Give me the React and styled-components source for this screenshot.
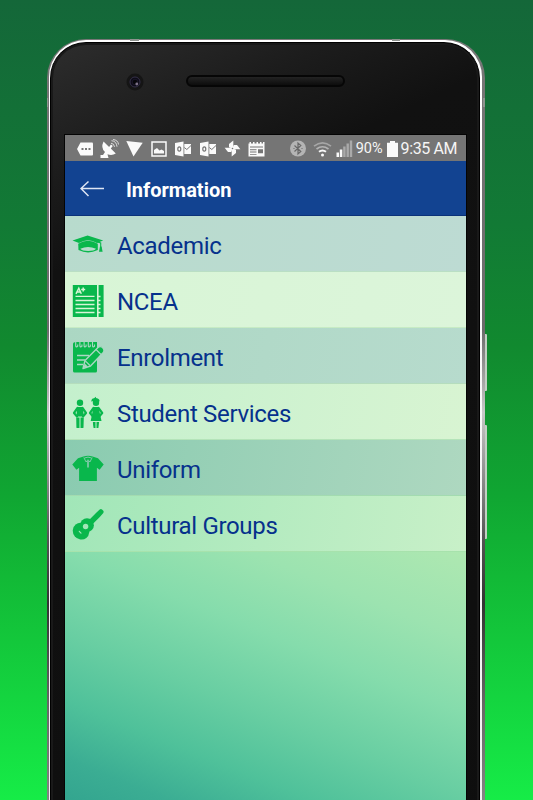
import React from 'react';
import styled, { createGlobalStyle } from 'styled-components';

const GlobalStyle = createGlobalStyle`
  * { box-sizing: border-box; }
  body { margin: 0; overflow: hidden; font-family: Roboto, "Noto Sans", sans-serif; }
  svg { display: block; }
`;

const Stage = styled.main`
  height: 800px;
  width: 533px;
  overflow: hidden;
  padding: 39px 0 0 47px;
  background: linear-gradient(180deg, #146739 0%, #127a35 28%, #11892f 43%, #10a632 62%, #12b936 72%, #14d43f 87%, #16ec47 100%);
`;

const Phone = styled.div`
  position: relative;
  width: 438px;
  height: 830px;
  padding: 1px 3px 0 2px;
  border-radius: 39px 39px 0 0;
  background: linear-gradient(180deg, #777 0%, #6b6b6b 35%, #c8c8c8 45%, #555 60%, #333 68%, #666 80%, #999 100%);
`;

const Rim = styled.div`
  height: 100%;
  padding: 2px 2px 0 1px;
  border-radius: 37px 37px 0 0;
  background: linear-gradient(180deg, #fff, #eee);
`;

const Bezel = styled.div`
  height: 100%;
  border-radius: 36px 36px 0 0;
  padding: 0 13px 0 14px;
  border: 1px solid #000;
  border-bottom: 0;
  box-shadow: inset 0 0 0 2px #191919;
  background: linear-gradient(155deg, #2d2d2d 0px, #1c1c1c 120px, #111 210px, #0e0e0e 100%);
`;

const SideButton = styled.span`
  position: absolute;
  left: 438px;
  top: ${(p) => p.$top}px;
  width: 2px;
  height: ${(p) => p.$height}px;
  border-radius: 0 1px 1px 0;
  background: #c3cfc4;
`;

const AntennaMark = styled.span`
  position: absolute;
  left: ${(p) => p.$left}px;
  top: ${(p) => p.$top}px;
  width: ${(p) => p.$width}px;
  height: ${(p) => p.$height}px;
  background: #8e938f;
`;

const Forehead = styled.div`
  height: 92px;
  display: flex;
  align-items: flex-start;
  padding: 29px 0 0 61px;
`;

const Camera = styled.div`
  width: 18px;
  height: 18px;
  margin-top: 1px;
`;

const Speaker = styled.div`
  width: 159px;
  height: 12px;
  margin: 3px 0 0 42px;
  border-radius: 6px;
  border: 2px solid #060606;
  background: linear-gradient(180deg, #232323, #0d0d0d);
`;

const Screen = styled.section`
  width: 401px;
  height: 665px;
  box-shadow: 0 0 0 1px #040404;
  background: linear-gradient(22deg, #33a58f 0%, #3bad93 5%, #4fc19a 12%, #68cea2 20%, #85dcac 30%, #9ce3b0 39%, #afe8b1 50%, #bcecb8 70%, #b5dfc5 100%);
`;

const StatusBar = styled.div`
  height: 26px;
  display: flex;
  align-items: center;
  padding: 1px 9px 0 8px;
  background: #757575;
  color: #f5f5f5;
  fill: #fafafa;
`;

const Notification = styled.span`
  width: 24.5px;
  display: flex;
  justify-content: center;
`;

const SystemGroup = styled.div`
  margin-left: auto;
  display: flex;
  align-items: center;
`;

const StatusText = styled.span`
  font-size: ${(p) => p.$size}px;
  line-height: 20px;
  white-space: nowrap;
  margin-left: ${(p) => p.$gap}px;
  letter-spacing: ${(p) => p.$tracking || 0}px;
`;

const SystemIcon = styled.span`
  margin-left: ${(p) => p.$gap}px;
`;

const Header = styled.header`
  height: 55px;
  display: flex;
  align-items: center;
  padding: 1px 0 0 15px;
  background: #124391;
  border-bottom: 1px solid #0b3279;
`;

const Title = styled.h1`
  margin: 2px 0 0 22px;
  font-size: 20px;
  line-height: 26px;
  font-weight: 700;
  color: #fff;
`;

const List = styled.ul`
  margin: 0;
  padding: 0;
  list-style: none;
`;

const Row = styled.li`
  height: 56px;
  display: flex;
  align-items: center;
  padding: 2px 0 0 7px;
  border-bottom: 1px solid ${(p) => p.$line};
  background: linear-gradient(100deg, ${(p) => p.$from}, ${(p) => p.$to});
`;

const RowIcon = styled.span`
  width: 32px;
  height: 34px;
  color: #09b74c;
`;

const RowLabel = styled.span`
  margin: 2px 0 0 13px;
  font-size: 24px;
  line-height: 32px;
  letter-spacing: -0.32px;
  color: #06318c;
`;

const G = 'currentColor';

const CapIcon = ({ hole }) => (
  <svg width="32" height="34" viewBox="0 0 32 34">
    <path fill={G} d="M.5 12.4 15.5 7.500 31.2 12.4 25 14.9Q16 9.500 7 14.9Z" />
    <path fill={G} d="M6.2 15.7Q16 9.8 25.8 15.7V22Q16 26.9 6.500 22Z" />
    <path fill={hole} d="M8.300 20.800Q16 17.300 24 20.800 22.300 23 16.2 23 10 23 8.300 20.800Z" />
    <path fill="none" stroke={G} strokeWidth="1.1" d="M24 13.500 28.7 15v5" />
    <path fill={G} d="M28 18.500h1.6l1 5.300H27Z" />
  </svg>
);

const PaperIcon = ({ hole }) => (
  <svg width="32" height="34" viewBox="0 0 32 34">
    <path fill={G} d="M.8 1H25v32H.8ZM26.6 1h5v32h-5Z" />
    <path stroke={hole} strokeWidth="1.500" fill="none" d="M4 9.8 6.8 4.200 9.300 9.8M4.900 8h3.800M9.200 5.500h4M11.200 3.500v4" />
    <path stroke={hole} strokeWidth="1.300" d="M3.500 12.300h19M3.500 16.500h19M3.500 20.500h19M3.500 24.500h19M3.500 28.500h19M25 12.500h3.500M25 16.500h3.500M25 20.500h3.500M25 24.500h3.500M25 28.500h3.500" />
  </svg>
);

const NotepadIcon = ({ hole }) => (
  <svg width="32" height="34" viewBox="0 0 32 34">
    <path fill={G} d="M1 4Q1 2 4 2H25V31q0 1.500-1.500 1.500h-21Q1 32.500 1 31Z" />
    <g fill="none" stroke={hole} strokeWidth="1.100">
      {[3.7, 7.9, 12.1, 16.3, 20.5].map((x) => (
        <path key={x} d={`M${x} 1v5q.5 1.600 2 .3V4.500`} />
      ))}
      <path strokeWidth="1.400" d="M5 15.500h12M5 20h8M5 24.500h6" />
    </g>
    <path fill={G} stroke={hole} strokeWidth="1.400" strokeLinejoin="round" d="m11 28.500 2-8L26 7.500q2.500-2 5 .5 2 2.500 0 4.800L18.500 26Z" />
    <path fill="none" stroke={hole} strokeWidth="1.100" d="m13.300 20.800 4.700 4.700M24 9.500l5 5" />
    <path fill={hole} d="m11.500 28 1.300-4.500 3 3Z" />
  </svg>
);

const StudentsIcon = () => (
  <svg width="32" height="34" viewBox="0 0 32 34">
    <g fill={G}>
      <circle cx="8" cy="6.800" r="3.200" />
      <path d="M5.500 11h5L12 20.500H4.200Z" />
      <path d="M4.200 21.500h3.300V32H4.700Q4.400 32 4.400 31ZM8.500 21.500h3.300L11.500 31q0 1-.3 1H8.500Z" />
      <circle cx="24" cy="6.800" r="3.200" />
      <path d="M19.200 5.500Q19.500 2.300 22 2.200l2-1.400v1.300q4 .800 3.500 3.500L24 4.800Z" />
      <path d="M21.500 11h5l3 14H18.700ZM20.900 26h2.600v6h-1.900q-.7-3.500-.7-6ZM24.500 26h2.600l-.7 6h-1.900Z" />
    </g>
    <g fill="none" stroke={G} strokeWidth="2.200" strokeLinejoin="round" strokeLinecap="round">
      <path d="M5.500 12 2 17l3 3.500M10.500 12l3.500 5-3 3.500M21.500 12 18 17l3 3.500M26.500 12l3.700 5-3 3.500" />
    </g>
  </svg>
);

const ShirtIcon = ({ hole }) => (
  <svg width="32" height="34" viewBox="0 0 32 34">
    <path fill={G} d="M11.500 4.500Q16 3 20.500 4.500L26 6.300 31.700 12.500 27.600 17.800 24.900 15.800V29H7.100V15.800L4.400 17.800.3 12.500 6 6.300Z" />
    <path fill="none" stroke={hole} strokeWidth=".9" d="M12.500 6Q16 4.200 19.500 6M11.800 5.500l2.300 4.500L16 7.700l1.900 2.300 2.300-4.500" />
    <path stroke={hole} strokeWidth="1.600" d="M16 9v6.500" />
  </svg>
);

const GuitarIcon = ({ hole }) => (
  <svg width="32" height="34" viewBox="0 0 32 34">
    <g fill={G}>
      <ellipse cx="9" cy="23.200" rx="8" ry="8.600" transform="rotate(-38 9 23.200)" />
      <circle cx="15" cy="17.200" r="6.900" />
      <path d="M17 12 24 5 27.700 1.500q1.300-1 2.300 0l1.300 1.300q.8 1-.2 2.400l-3.300 3.800L21 15.800Z" />
    </g>
    <circle cx="13.600" cy="18.500" r="2.700" fill={hole} />
    <path stroke={hole} strokeWidth="1.200" strokeLinecap="round" d="m7.300 23.300 1.700 1.800" />
  </svg>
);

const EnvelopeIcon = () => (
  <svg width="16" height="16" viewBox="0 0 16 16">
    <path d="M0 2 8.500.5v15L0 14ZM9.300 3H16v10H9.300Z" />
    <ellipse cx="4.300" cy="8" rx="1.500" ry="2.200" fill="none" stroke="#757575" strokeWidth="1.200" />
    <path fill="none" stroke="#757575" strokeWidth="1" d="m9.300 6.500 2.500 2 4.200-4" />
  </svg>
);

const notifications = [
  <svg width="16" height="14" viewBox="0 0 16 14" key="msg">
    <path d="M3.500.5H15q1 0 1 1v11q0 1-1 1H3.500L0 7Z" />
    <path fill="#757575" d="M4.500 6h2v2h-2zM8 6h2v2H8zM11.500 6h2v2h-2z" />
  </svg>,
  <svg width="19" height="20" viewBox="0 0 19 20" key="dish">
    <path d="M3.500 2.500Q.5 9 5 13L3 16H.5v3h8l-1-3.700Q12 17 15.800 14.500L10.800 9.500l2-2.500-1.800-1.500-1.900 2.500Z" />
    <path fill="none" stroke="#dcdcdc" strokeWidth="1" d="M11 4.200q3.200.3 3.500 3.700M11.500 1.700q5 .4 5.500 6M13 .5q5 .5 5.500 5" />
  </svg>,
  <svg width="17" height="17" viewBox="0 0 17 17" key="arrow"><path d="M.3 1 16.700 2.800 7.500 16.500Z" /></svg>,
  <svg width="16" height="16" viewBox="0 0 16 16" key="photo">
    <path fill="none" stroke="#fafafa" strokeWidth="1.500" d="M1 1h14v14H1Z" />
    <path d="M3 12.500V9l3-2 2.500 2.500 2-1L13 10v2.500Z" />
  </svg>,
  <EnvelopeIcon key="mail1" />,
  <EnvelopeIcon key="mail2" />,
  <svg width="17" height="17" viewBox="0 0 17 17" key="pinwheel">
    {[0, 90, 180, 270].map((a) => (
      <path key={a} transform={`rotate(${a} 8.5 8.5)`} d="M9.300 8V.6L5 4V7.200L8 8.500Z" />
    ))}
    <circle cx="8.500" cy="8.500" r=".8" fill="#757575" />
  </svg>,
  <svg width="17" height="16" viewBox="0 0 17 16" key="news">
    <path d="M.5 2.500h16v13H.5ZM1.500 1h1.500v2H1.500ZM5 1h1.500v2H5ZM8.500 1H10v2H8.500ZM12 1h1.500v2H12ZM15 1h1.500v2H15Z" />
    <path fill="#757575" d="M2 5.500h13v1H2ZM2 8.300h6.500v.9H2ZM2 10.600h6.500v.9H2ZM2 12.900h6.500v.9H2ZM10 8.300h5v4h-5Z" />
  </svg>,
];

const BluetoothIcon = () => (
  <svg width="16" height="17" viewBox="0 0 16 17">
    <circle cx="8" cy="8.500" r="8" fill="#b4b4b4" />
    <path fill="none" stroke="#686868" strokeWidth="1.200" d="m4.500 5.500 6.300 6L8 14V3l2.800 2.500-6.300 6M3.500 8.500h1M11.500 8.500h1" />
  </svg>
);

const WifiIcon = () => (
  <svg width="19" height="16" viewBox="0 0 19 16">
    <g fill="none" strokeWidth="1.700">
      <path stroke="#a6a6a6" d="M1 5.200Q9.500-1.500 18 5.200" />
      <path stroke="#b3b3b3" d="M3.500 8q6-4.500 12 0" />
      <path stroke="#f7f7f7" strokeWidth="2" d="M6 10.800q3.500-2.600 7 0" />
    </g>
    <circle cx="9.500" cy="14" r="1.500" />
  </svg>
);

const SignalIcon = () => (
  <svg width="17" height="17" viewBox="0 0 17 17">
    <path d="M.5 12.500H3V17H.5ZM3.800 9.500h2.500V17H3.800Z" />
    <path fill="#aaa" d="M7.200 6.500h2.400V17H7.200ZM10.500 3.500h2.400V17h-2.400ZM13.800.5h2.400V17h-2.400Z" />
  </svg>
);

const BatteryIcon = () => (
  <svg width="11" height="16" viewBox="0 0 11 16"><path d="M3 0h5v1.800h3V16H0V1.800h3Z" /></svg>
);

const BackIcon = () => (
  <svg width="24" height="18" viewBox="0 0 24 18">
    <path fill="none" stroke="#dfe6f4" strokeWidth="1.500" d="M24 8.500H1M8.500 1.500 1 8.500l7.500 7.500" />
  </svg>
);

const CameraLens = () => (
  <svg width="18" height="18" viewBox="0 0 18 18">
    <circle cx="9" cy="9" r="8.500" fill="#151515" />
    <circle cx="9" cy="9" r="5" fill="#0d0b16" stroke="#35304a" strokeWidth="1" />
    <circle cx="9" cy="9" r="2.800" fill="#06060a" stroke="#25203b" strokeWidth=".6" />
    <circle cx="10.800" cy="11" r="1.400" fill="#7d7288" />
  </svg>
);

const items = [
  { label: 'Academic', Icon: CapIcon, from: '#b8dbcd', to: '#bddbd3', line: '#badfc4' },
  { label: 'NCEA', Icon: PaperIcon, from: '#d8f5d6', to: '#dcf5da', line: '#c6ebc4' },
  { label: 'Enrolment', Icon: NotepadIcon, from: '#abd7c3', to: '#b7dbcd', line: '#b5ddbd' },
  { label: 'Student Services', Icon: StudentsIcon, from: '#c4f0cd', to: '#d8f4d2', line: '#b4e4b9' },
  { label: 'Uniform', Icon: ShirtIcon, from: '#8acbb0', to: '#aed8c0', line: '#a3dbb0' },
  { label: 'Cultural Groups', Icon: GuitarIcon, from: '#a1e6b8', to: '#c8f0c8', line: '#a7e2ac' },
];

export default function App() {
  return (
    <Stage>
      <GlobalStyle />
      <Phone>
        <AntennaMark $left={83} $top={0} $width={9} $height={2} />
        <AntennaMark $left={345} $top={0} $width={8} $height={2} />
        <AntennaMark $left={0} $top={59} $width={1} $height={9} />
        <AntennaMark $left={436} $top={59} $width={2} $height={9} />
        <SideButton $top={295} $height={57} />
        <SideButton $top={386} $height={114} />
        <Rim>
          <Bezel>
            <Forehead>
              <Camera><CameraLens /></Camera>
              <Speaker />
            </Forehead>
            <Screen>
              <StatusBar>
                {notifications.map((icon) => <Notification key={icon.key}>{icon}</Notification>)}
                <SystemGroup>
                  <BluetoothIcon />
                  <SystemIcon $gap={7}><WifiIcon /></SystemIcon>
                  <SystemIcon $gap={4}><SignalIcon /></SystemIcon>
                  <StatusText $size={14.5} $gap={3}>90%</StatusText>
                  <SystemIcon $gap={4}><BatteryIcon /></SystemIcon>
                  <StatusText $size={16} $gap={3} $tracking={-0.4}>9:35 AM</StatusText>
                </SystemGroup>
              </StatusBar>
              <Header>
                <BackIcon />
                <Title>Information</Title>
              </Header>
              <List>
                {items.map(({ label, Icon, from, to, line }) => (
                  <Row key={label} $from={from} $to={to} $line={line}>
                    <RowIcon><Icon hole={from} /></RowIcon>
                    <RowLabel>{label}</RowLabel>
                  </Row>
                ))}
              </List>
            </Screen>
          </Bezel>
        </Rim>
      </Phone>
    </Stage>
  );
}
